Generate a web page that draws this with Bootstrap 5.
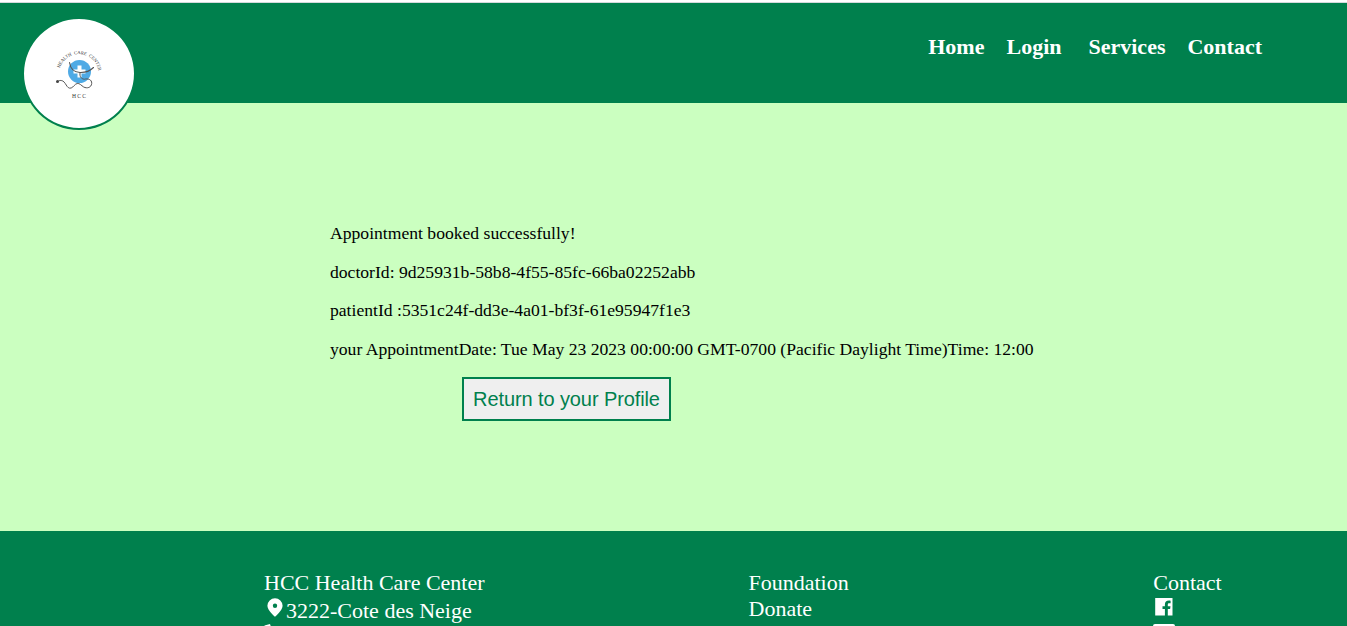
<!DOCTYPE html>
<html lang="en">
<head>
<meta charset="utf-8">
<meta name="viewport" content="width=device-width, initial-scale=1">
<title>HCC Health Care Center</title>
<link href="https://cdn.jsdelivr.net/npm/bootstrap@5.3.0/dist/css/bootstrap.min.css" rel="stylesheet">
<style>
  :root { --hcc-green: #00804d; --hcc-mint: #cbffc0; }
  html, body { height: 100%; overflow: hidden; }
  body { font-family: "Liberation Serif", "Times New Roman", serif; color: #000; background: var(--hcc-mint); border-top: 2px solid #fff; }
  .site-header { height: 101px; background: var(--hcc-green); border-top: 1px solid #d4d9dc; padding: 14px 85px 0 22px; }
  .logo-disc { width: 114px; height: 113px; flex: none; background: #fff; border: 2px solid var(--hcc-green); border-radius: 50%; position: relative; z-index: 1; }
  .logo-disc svg { display: block; }
  .site-nav { font-size: 22px; line-height: 26px; padding-top: 17px; }
  .site-nav a { color: #fff; font-weight: 700; text-decoration: none; margin-left: 22px; }
  .site-nav a.nav-services { margin-left: 27px; }
  .booking { height: 428px; padding: 120px 0 0 330px; font-size: 17.61px; line-height: 20px; }
  .booking p { margin: 0 0 18.6px; }
  .profile-btn { margin-left: 132px; margin-top: -.5px; width: 209px; height: 44px; padding: 0; font: 20px/40px "Liberation Sans", Arial, sans-serif; letter-spacing: -.1px; color: var(--hcc-green); background: #efefef; border: 2px solid var(--hcc-green); border-radius: 0; }
  .site-footer { background: var(--hcc-green); color: #fff; font-size: 22px; line-height: 26px; height: 95px; overflow: hidden; padding: 39px 125px 0 264px; }
  .site-footer svg { display: block; flex: none; }
  .address-line { padding-top: 2px; }
  .col-address { width: 484.5px; }
  .col-links { width: 404.8px; }
</style>
</head>
<body>
<header class="site-header d-flex justify-content-between align-items-start">
  <div class="logo-disc">
    <svg width="110" height="109" viewBox="24 19 110 109" role="img" aria-label="Health Care Center">
      <defs><path id="nameArc" d="M59.800 68A20 20 0 0 1 98.500 70.500"/></defs>
      <text font-family="Liberation Serif, serif" font-size="4.700" word-spacing="1.200" fill="#333"><textPath href="#nameArc" textLength="53">HEALTH CARE CENTER</textPath></text>
      <circle cx="79.500" cy="71.500" r="11.500" fill="#4faae5"/>
      <path d="M77.500 65.500h4v4h4v4h-4v4h-4v-4h-4v-4h4z" fill="#fff"/>
      <g fill="none" stroke="#555" stroke-linecap="round">
        <path d="M69.500 62.500C70.500 69 74 72.300 80 72.500s10-1.500 13.500-5" stroke-width="1.100"/>
        <path d="M80 73c-.5 3.500 1 6 4.500 6.200 3-.8 7.500 0 7.200 4.300-.3 4-4.700 5.300-8 3.500-2.500-1.500-4-4-6.500-3.500s-3.500 3.500-6 4.500c-5 1.500-5-7-10-7.500-1.500-.2-2.500.3-3.500 1" stroke-width="1"/>
      </g>
      <circle cx="57.500" cy="81.500" r="1.500" fill="#444"/>
      <text x="72" y="98" font-family="Liberation Serif, serif" font-size="5.600" fill="#333" textLength="14">HCC</text>
    </svg>
  </div>
  <nav class="site-nav d-flex">
    <a href="#">Home</a><a href="#">Login</a><a class="nav-services" href="#">Services</a><a href="#">Contact</a>
  </nav>
</header>
<main class="booking">
  <p>Appointment booked successfully!</p>
  <p>doctorId: 9d25931b-58b8-4f55-85fc-66ba02252abb</p>
  <p>patientId :5351c24f-dd3e-4a01-bf3f-61e95947f1e3</p>
  <p>your AppointmentDate: Tue May 23 2023 00:00:00 GMT-0700 (Pacific Daylight Time)Time: 12:00</p>
  <button type="button" class="btn profile-btn d-block">Return to your Profile</button>
</main>
<footer class="site-footer d-flex">
  <div class="col-address flex-shrink-0">
    <div>HCC Health Care Center</div>
    <div class="address-line d-flex">
      <svg width="22" height="22" viewBox="0 0 22 22"><path fill="#fff" fill-rule="evenodd" d="M11 .3a7.600 7.600 0 0 0-7.600 7.500C3.400 12.500 11 18.800 11 18.800S18.600 12.500 18.600 7.800A7.600 7.600 0 0 0 11 .3zm0 5.200a2.200 2.200 0 1 1 0 4.400 2.200 2.200 0 0 1 0-4.400z"/></svg>
      <span>3222-Cote des Neige</span>
    </div>
    <svg width="22" height="22" viewBox="0 0 22 22"><path fill="#fff" d="M.5 1.500 6 0l2 6-2.500 2c1.500 3 4 5.500 7 7l2-2.500 6 2-1.500 5C10 19.500 0 11 .5 1.500z"/></svg>
  </div>
  <div class="col-links flex-shrink-0">
    <div>Foundation</div>
    <div>Donate</div>
  </div>
  <div>
    <div>Contact</div>
    <svg width="22" height="28" viewBox="0 0 22 28"><path fill="#fff" d="M2.200 2h17.300v17.500h-4.700V13h2.300l.4-2.700h-2.700V8.700c0-.9.400-1.400 1.500-1.400h1.300V4.700c-3.700-.6-5.700.8-5.700 3.700v1.900H9.500V13h2.400v6.500H2.200z"/></svg>
    <svg width="22" height="20" viewBox="0 0 22 20"><rect width="22" height="18" rx="2" fill="#fff"/></svg>
  </div>
</footer>
<script src="https://cdn.jsdelivr.net/npm/bootstrap@5.3.0/dist/js/bootstrap.bundle.min.js"></script>
</body>
</html>
